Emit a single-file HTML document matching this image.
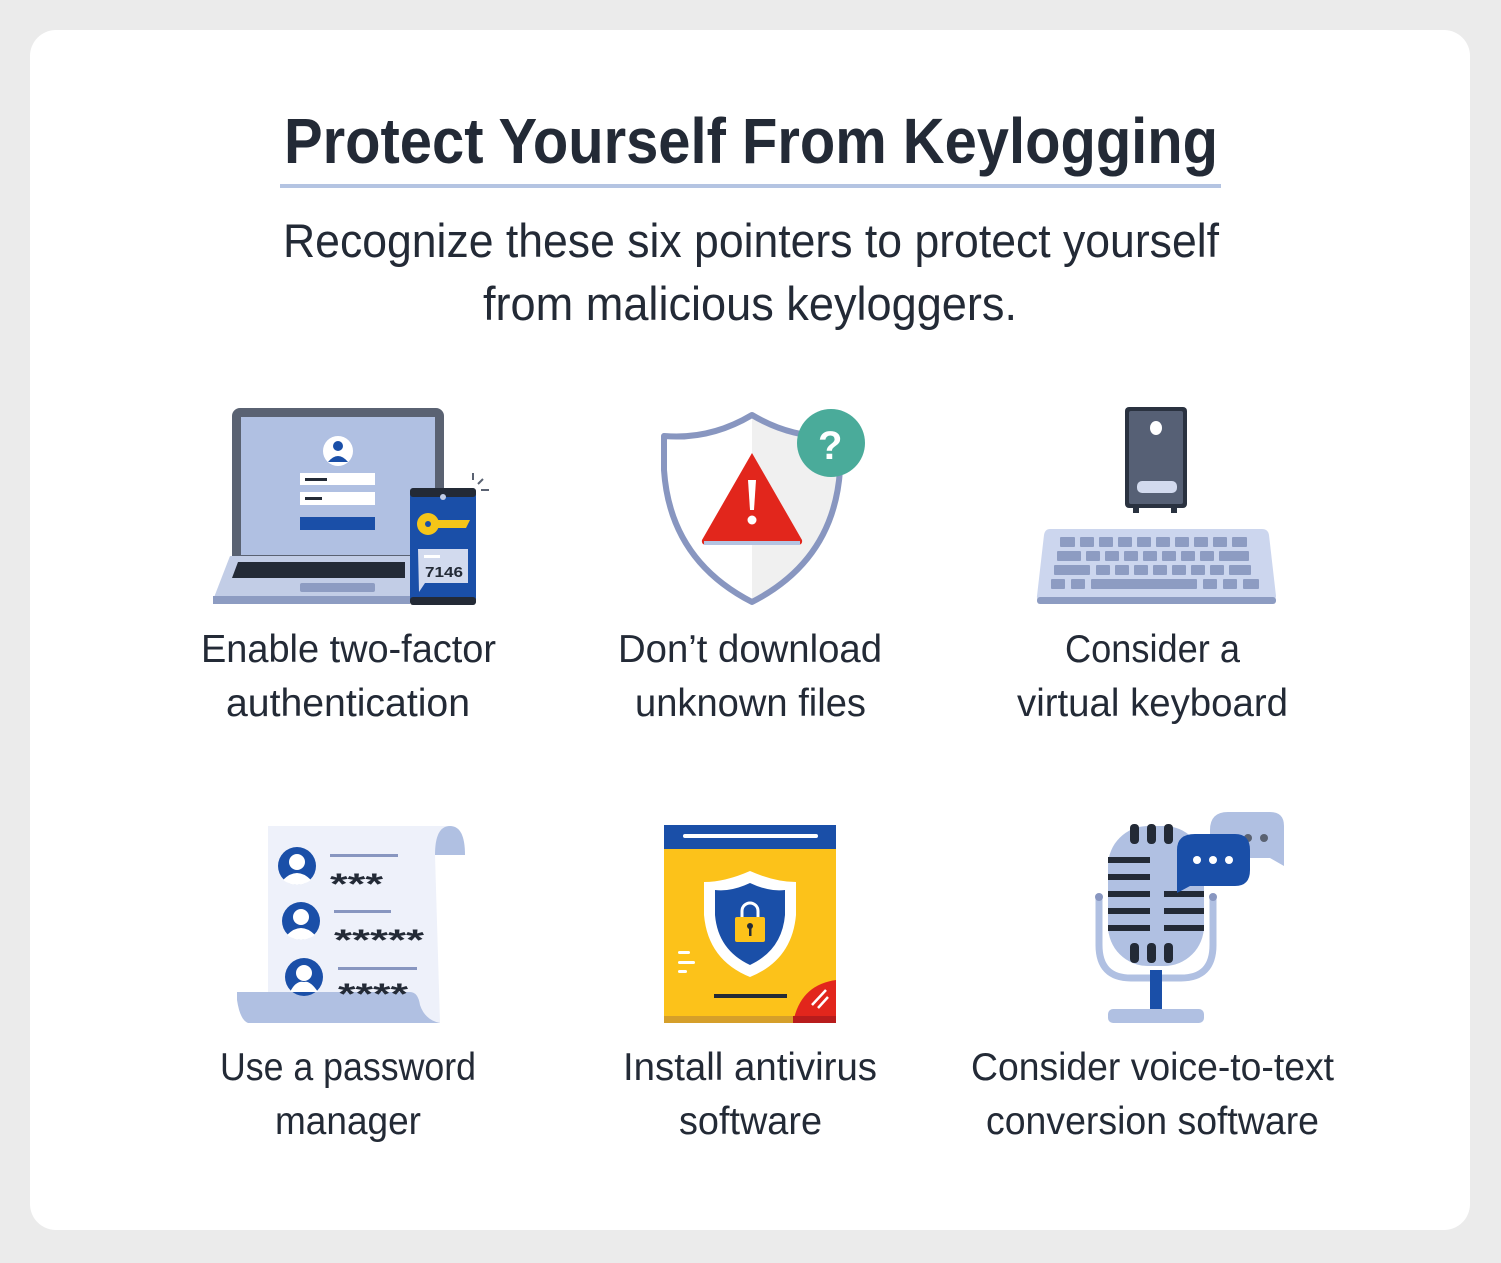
<!DOCTYPE html>
<html><head><meta charset="utf-8"><style>
html,body{margin:0;padding:0;background:#ebebeb;}
svg{display:block}
text{font-family:"Liberation Sans",sans-serif;fill:#232a36}
</style></head><body>
<svg width="1501" height="1263" viewBox="0 0 1501 1263" xmlns="http://www.w3.org/2000/svg">
<rect x="0" y="0" width="1501" height="1263" fill="#ebebeb"/>
<rect x="30" y="30" width="1440" height="1200" rx="26" fill="#fff"/>
<text x="284" y="163" font-size="64" font-weight="bold" textLength="934" lengthAdjust="spacingAndGlyphs">Protect Yourself From Keylogging</text>
<rect x="280" y="184" width="941" height="4" fill="#b4c4e2"/>
<text x="283" y="257" font-size="47" textLength="936" lengthAdjust="spacingAndGlyphs">Recognize these six pointers to protect yourself</text>
<text x="483" y="320" font-size="47" textLength="534" lengthAdjust="spacingAndGlyphs">from malicious keyloggers.</text>

<g font-size="39">
<text x="201" y="662" textLength="295" lengthAdjust="spacingAndGlyphs">Enable two-factor</text>
<text x="226" y="716" textLength="244" lengthAdjust="spacingAndGlyphs">authentication</text>
<text x="618" y="662" textLength="264" lengthAdjust="spacingAndGlyphs">Don’t download</text>
<text x="635" y="716" textLength="231" lengthAdjust="spacingAndGlyphs">unknown files</text>
<text x="1065" y="662" textLength="175" lengthAdjust="spacingAndGlyphs">Consider a</text>
<text x="1017" y="716" textLength="271" lengthAdjust="spacingAndGlyphs">virtual keyboard</text>
<text x="220" y="1080" textLength="256" lengthAdjust="spacingAndGlyphs">Use a password</text>
<text x="275" y="1134" textLength="146" lengthAdjust="spacingAndGlyphs">manager</text>
<text x="623" y="1080" textLength="254" lengthAdjust="spacingAndGlyphs">Install antivirus</text>
<text x="679" y="1134" textLength="143" lengthAdjust="spacingAndGlyphs">software</text>
<text x="971" y="1080" textLength="363" lengthAdjust="spacingAndGlyphs">Consider voice-to-text</text>
<text x="986" y="1134" textLength="333" lengthAdjust="spacingAndGlyphs">conversion software</text>
</g>

<!-- Laptop -->
<rect x="232" y="408" width="212" height="156" rx="8" fill="#5a6272"/>
<rect x="241" y="417" width="194" height="138" fill="#b0c0e2"/>
<path d="M230 556 H410 V600 H213 Z" fill="#c2cde6"/>
<rect x="213" y="596" width="197" height="8" fill="#8d9cc2"/>
<path d="M238 562 H405 V578 H232 Z" fill="#232a36"/>
<rect x="300" y="583" width="75" height="9" rx="2" fill="#8d9cc2"/>
<circle cx="338" cy="451" r="15" fill="#fff"/>
<circle cx="338" cy="446" r="5" fill="#1a4fa8"/>
<path d="M328 462 Q338 450 348 462 Z" fill="#1a4fa8"/>
<rect x="300" y="473" width="75" height="12" fill="#fff"/>
<rect x="305" y="478" width="22" height="3" fill="#232a36"/>
<rect x="300" y="492" width="75" height="13" fill="#fff"/>
<rect x="305" y="497" width="17" height="3" fill="#232a36"/>
<rect x="300" y="517" width="75" height="13" fill="#1a4fa8"/>
<rect x="410" y="488" width="66" height="117" rx="4" fill="#1a4fa8"/>
<rect x="410" y="488" width="66" height="9" rx="3" fill="#232a36"/>
<rect x="410" y="597" width="66" height="8" rx="3" fill="#232a36"/>
<circle cx="443" cy="497" r="3" fill="#c2cde6"/>
<circle cx="428" cy="524" r="11" fill="#f5c518"/>
<circle cx="428" cy="524" r="3" fill="#1a4fa8"/>
<path d="M436 520 H470 L466 528 H436 Z" fill="#f5c518"/>
<path d="M418 549 H468 V583 H425 L419 592 Z" fill="#d2daee"/>
<rect x="424" y="555" width="16" height="3" fill="#fff"/>
<text x="425" y="577" font-size="15" font-weight="bold" textLength="38" lengthAdjust="spacingAndGlyphs">7146</text>
<path d="M473 473 v7 M478 484 l5 -5 M481 490 h8" stroke="#5a6272" stroke-width="2"/>

<!-- Shield -->
<path d="M752 415 Q710 440 664 436 L664 470 Q670 560 752 602 Z" fill="#fff"/>
<path d="M752 415 Q794 440 840 436 L840 470 Q834 560 752 602 Z" fill="#f0f0f0"/>
<path d="M752 415 Q710 440 664 436 L664 470 Q670 560 752 602 Q834 560 840 470 L840 436 Q794 440 752 415 Z" fill="none" stroke="#8896c0" stroke-width="6" stroke-linejoin="round"/>
<path d="M752 453 L802 540 Q803 545 797 545 L707 545 Q701 545 702 540 Z" fill="#e2261c"/>
<rect x="704" y="541" width="96" height="4" fill="#b4c4e2"/>
<path d="M748 480 h8 l-2 30 h-4 z" fill="#fff"/>
<circle cx="752" cy="520" r="4.5" fill="#fff"/>
<circle cx="831" cy="443" r="34" fill="#4aab9a"/>
<text x="818" y="459" font-size="40" font-weight="bold" style="fill:#fff">?</text>

<!-- Keyboard -->
<rect x="1125" y="407" width="62" height="101" rx="4" fill="#2a3240"/>
<rect x="1129" y="411" width="54" height="93" rx="2" fill="#566075"/>
<ellipse cx="1156" cy="428" rx="6" ry="7" fill="#fff"/>
<rect x="1137" y="481" width="40" height="12" rx="5" fill="#d2daee"/>
<rect x="1133" y="505" width="6" height="8" fill="#2a3240"/>
<rect x="1171" y="505" width="6" height="8" fill="#2a3240"/>
<path d="M1048 529 H1262 Q1268 529 1269 535 L1276 596 Q1276 600 1270 600 H1042 Q1036 600 1037 596 L1044 535 Q1045 529 1050 529 Z" fill="#ccd6ee"/>
<rect x="1037" y="597" width="239" height="7" rx="3" fill="#8d9cc2"/>
<g fill="#8d9cc2">
<rect x="1060" y="537" width="15" height="10" rx="1"/><rect x="1080" y="537" width="14" height="10" rx="1"/><rect x="1099" y="537" width="14" height="10" rx="1"/><rect x="1118" y="537" width="14" height="10" rx="1"/><rect x="1137" y="537" width="14" height="10" rx="1"/><rect x="1156" y="537" width="14" height="10" rx="1"/><rect x="1175" y="537" width="14" height="10" rx="1"/><rect x="1194" y="537" width="14" height="10" rx="1"/><rect x="1213" y="537" width="14" height="10" rx="1"/><rect x="1232" y="537" width="15" height="10" rx="1"/>
<rect x="1057" y="551" width="24" height="10" rx="1"/><rect x="1086" y="551" width="14" height="10" rx="1"/><rect x="1105" y="551" width="14" height="10" rx="1"/><rect x="1124" y="551" width="14" height="10" rx="1"/><rect x="1143" y="551" width="14" height="10" rx="1"/><rect x="1162" y="551" width="14" height="10" rx="1"/><rect x="1181" y="551" width="14" height="10" rx="1"/><rect x="1200" y="551" width="14" height="10" rx="1"/><rect x="1219" y="551" width="30" height="10" rx="1"/>
<rect x="1054" y="565" width="36" height="10" rx="1"/><rect x="1096" y="565" width="14" height="10" rx="1"/><rect x="1115" y="565" width="14" height="10" rx="1"/><rect x="1134" y="565" width="14" height="10" rx="1"/><rect x="1153" y="565" width="14" height="10" rx="1"/><rect x="1172" y="565" width="14" height="10" rx="1"/><rect x="1191" y="565" width="14" height="10" rx="1"/><rect x="1210" y="565" width="14" height="10" rx="1"/><rect x="1229" y="565" width="22" height="10" rx="1"/>
<rect x="1051" y="579" width="14" height="10" rx="1"/><rect x="1071" y="579" width="14" height="10" rx="1"/><rect x="1091" y="579" width="106" height="10" rx="1"/><rect x="1203" y="579" width="14" height="10" rx="1"/><rect x="1223" y="579" width="14" height="10" rx="1"/><rect x="1243" y="579" width="16" height="10" rx="1"/>
</g>

<!-- Scroll / password manager -->
<path d="M268 826 H450 Q435 835 435 855 L440 1023 H268 Z" fill="#eef1fa"/>
<path d="M435 855 Q435 826 450 826 Q465 826 465 855 Z" fill="#b0c0e2"/>
<path d="M237 992 H410 Q418 992 420 1005 Q425 1020 440 1023 H248 Q240 1020 237 1000 Z" fill="#b0c0e2"/>
<g fill="#1a4fa8">
<circle cx="297" cy="866" r="19"/><circle cx="301" cy="921" r="19"/><circle cx="304" cy="977" r="19"/>
</g>
<g fill="#fff">
<circle cx="297" cy="862" r="8"/><path d="M283 880 Q297 866 311 880 Q297 890 283 880Z"/>
<circle cx="301" cy="917" r="8"/><path d="M287 935 Q301 921 315 935 Q301 945 287 935Z"/>
<circle cx="304" cy="973" r="8"/><path d="M290 992 H318 Q310 980 304 982 Q296 980 290 992Z"/>
</g>
<g fill="#8896c0"><rect x="330" y="854" width="68" height="3"/><rect x="334" y="910" width="57" height="3"/><rect x="338" y="967" width="79" height="3"/></g>
<g font-size="30" font-weight="bold"><text x="330" y="894" textLength="53" lengthAdjust="spacingAndGlyphs">***</text><text x="334" y="950" textLength="90" lengthAdjust="spacingAndGlyphs">*****</text><text x="338" y="1004" textLength="70" lengthAdjust="spacingAndGlyphs">****</text></g>
<path d="M237 992 H410 Q418 992 420 1005 Q425 1020 440 1023 H248 Q240 1020 237 1000 Z" fill="#b0c0e2" opacity="0"/>

<!-- Antivirus book -->
<rect x="664" y="825" width="172" height="198" fill="#fcc21a"/>
<rect x="664" y="825" width="172" height="24" fill="#1a4fa8"/>
<rect x="683" y="834" width="135" height="4" rx="2" fill="#fff"/>
<rect x="664" y="1016" width="172" height="7" fill="#d59f2a"/>
<path d="M836 980 Q800 985 793 1023 H836 Z" fill="#e2261c"/>
<path d="M793 1016 H836 V1023 H793 Z" fill="#b81c1c"/>
<path d="M812 1005 l14 -15 M818 1008 l10 -11" stroke="#fff" stroke-width="2.5"/>
<path d="M750 871 Q725 882 704 882 L704 915 Q708 960 750 977 Q792 960 796 915 L796 882 Q775 882 750 871 Z" fill="#fff"/>
<path d="M750 883 Q731 892 715 890 L715 915 Q718 950 750 965 Q782 950 785 915 L785 890 Q769 892 750 883 Z" fill="#1a4fa8"/>
<path d="M742 918 v-7 a8 8 0 0 1 16 0 v7" fill="none" stroke="#fff" stroke-width="3"/>
<rect x="735" y="917" width="30" height="25" rx="2" fill="#fcc21a"/>
<circle cx="750" cy="926" r="3" fill="#232a36"/><rect x="749" y="927" width="2.5" height="9" fill="#232a36"/>
<g fill="#fff"><rect x="678" y="951" width="12" height="3" rx="1.5"/><rect x="678" y="961" width="17" height="3" rx="1.5"/><rect x="678" y="970" width="9" height="3" rx="1.5"/></g>
<rect x="714" y="994" width="73" height="4" fill="#232a36"/>

<!-- Mic -->
<path d="M1099 897 V945 Q1099 978 1131 978 H1181 Q1213 978 1213 945 V897" fill="none" stroke="#b0c0e2" stroke-width="7"/>
<circle cx="1099" cy="897" r="4" fill="#8896c0"/><circle cx="1213" cy="897" r="4" fill="#8896c0"/>
<rect x="1150" y="970" width="12" height="40" fill="#1a4fa8"/>
<rect x="1108" y="1009" width="96" height="14" rx="5" fill="#b0c0e2"/>
<rect x="1108" y="826" width="96" height="140" rx="40" fill="#b0c0e2"/>
<g fill="#232a36">
<rect x="1130" y="824" width="9" height="20" rx="4"/><rect x="1147" y="824" width="9" height="20" rx="4"/><rect x="1164" y="824" width="9" height="20" rx="4"/>
<rect x="1130" y="943" width="9" height="20" rx="4"/><rect x="1147" y="943" width="9" height="20" rx="4"/><rect x="1164" y="943" width="9" height="20" rx="4"/>
<rect x="1108" y="857" width="42" height="6"/><rect x="1108" y="874" width="42" height="6"/><rect x="1108" y="891" width="42" height="6"/><rect x="1108" y="908" width="42" height="6"/><rect x="1108" y="925" width="42" height="6"/>
<rect x="1164" y="891" width="40" height="6"/><rect x="1164" y="908" width="40" height="6"/><rect x="1164" y="925" width="40" height="6"/>
</g>
<path d="M1228 812 H1270 Q1284 812 1284 826 V866 L1270 858 H1228 Q1210 858 1210 840 V830 Q1210 812 1228 812 Z" fill="#b0c0e2"/>
<circle cx="1248" cy="838" r="4" fill="#5a6272"/><circle cx="1264" cy="838" r="4" fill="#5a6272"/>
<path d="M1195 834 H1235 Q1250 834 1250 850 V870 Q1250 886 1235 886 H1190 L1177 893 V850 Q1177 834 1195 834 Z" fill="#1a4fa8"/>
<circle cx="1197" cy="860" r="4" fill="#fff"/><circle cx="1213" cy="860" r="4" fill="#fff"/><circle cx="1229" cy="860" r="4" fill="#fff"/>
</svg>
</body></html>
